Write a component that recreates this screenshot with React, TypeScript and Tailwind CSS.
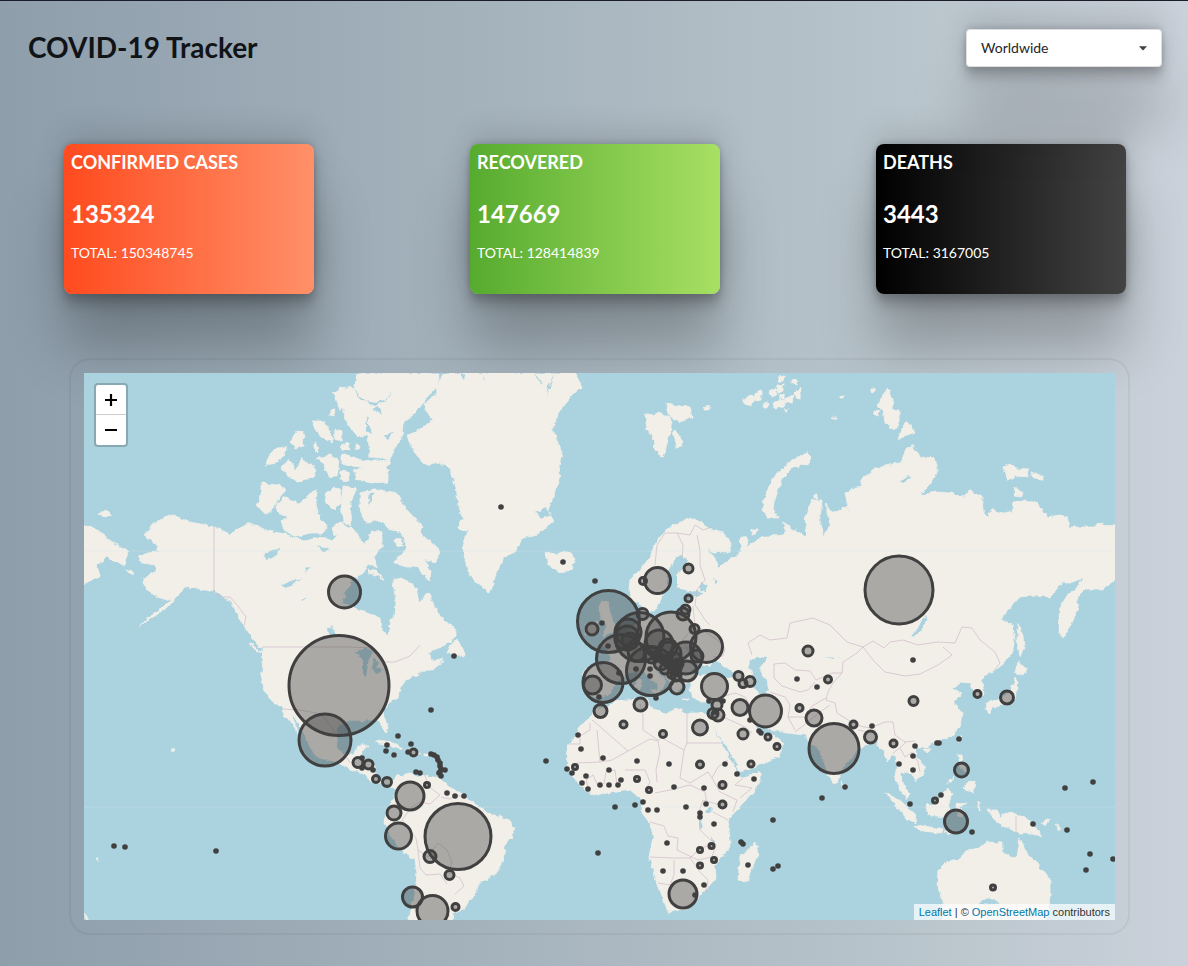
import { useState } from "react";

const LAND: string[] = [
  // North America
  "214,527 200,524 190,522 178,517 170,515 160,519 152,525 144,535 150,540 157,545 158,552 148,553 138,557 143,563 155,565 156,571 146,577 143,583 148,590 154,595 165,600 172,598 164,606 150,617 138,627 152,618 168,607 176,597 185,588 192,587 203,590 214,591 222,596 229,600 236,610 240,620 247,630 254,640 262,649 263,660 262,672 261,680 266,692 272,702 281,706 285,717 291,722 295,728 300,738 296,726 291,714 296,718 303,732 310,747 316,756 326,760 334,761 345,766 352,770 360,772 366,776 371,782 378,783 386,783 392,787 397,790 398,782 388,779 380,781 374,776 374,765 372,762 362,760 358,758 363,752 368,745 358,745 353,755 344,755 337,748 336,737 338,727 345,722 355,720 362,722 368,719 377,719 382,727 386,734 388,728 384,717 383,710 389,703 397,697 400,690 403,684 406,680 415,676 424,670 434,666 443,659 432,662 426,657 434,650 445,645 456,636 456,630 440,617 434,605 428,593 420,602 417,589 407,580 393,578 394,590 396,603 395,615 391,620 388,636 381,628 380,618 368,613 357,609 342,603 345,592 355,577 362,574 368,563 377,567 373,557 382,547 382,532 372,530 365,545 358,536 352,527 342,533 332,541 320,536 308,541 295,538 285,534 268,531 255,525 250,523 240,528 230,534",
  // Newfoundland and the Maritimes
  "447,653 452,643 456,639 462,647 465,656 458,655",
  "418,660 428,655 436,664 444,661 432,670 424,668",
  // Vancouver Island
  "249,643 255,646 262,653 256,651",
  // Victoria Island, Banks Island, Melville Island
  "277,503 284,497 297,503 304,500 307,495 317,490 316,503 317,513 327,527 324,533 311,533 297,537 284,530 281,520 289,517 277,513",
  "261,483 277,485 286,490 277,500 274,508 266,515 257,505 261,495",
  "281,466 288,460 297,470 302,457 306,464 314,466 315,476 306,480 297,482 286,475",
  "265,466 270,454 277,448 287,447 283,457 275,463",
  "290,441 299,430 304,432 303,446 295,449",
  "313,421 324,421 334,438 331,443 324,439 317,432",
  "317,458 330,455 339,460 337,476 330,477 324,466",
  "324,495 334,487 340,489 341,503 334,510 326,502",
  "333,392 345,386 347,404 340,411",
  "334,429 342,431 342,442 336,439",
  "330,409 335,409 334,416 330,415",
  "314,443 317,445 318,452 314,448",
  "340,445 349,443 350,450 342,450",
  "355,445 360,445 359,450 355,449",
  "332,528 340,522 350,528 342,536 334,535",
  "342,453 350,456 362,460 374,461 390,460 386,470 370,468 352,466 342,464",
  "340,470 348,472 349,481 341,480",
  "354,470 372,466 388,469 388,482 372,483 357,480",
  "343,487 357,488 350,503 352,526 343,522 341,502",
  "360,493 360,510 367,523 380,520 388,528 402,533 407,548 393,563 407,567 417,567 430,582 431,570 423,560 437,562 439,550 428,540 420,533 423,527 407,510 397,493 380,490 370,490",
  "395,540 401,538 403,545 397,547",
  "368,568 376,571 385,580 378,576 369,573",
  // Ellesmere and Axel Heiberg
  "357,373 355,387 347,388 343,403 345,420 352,430 357,437 368,436 370,457 380,458 390,460 392,452 402,437 403,423 412,415 420,407 428,395 437,387 440,373",
  // Greenland
  "445,373 436,387 437,393 423,405 432,420 420,430 408,435 412,448 420,460 425,465 440,462 450,470 456,487 458,503 463,520 468,530 463,547 465,560 468,572 477,583 490,593 495,577 503,558 517,550 523,538 540,533 552,522 548,510 553,497 560,480 559,465 562,453 553,430 558,413 570,397 582,387 578,378 573,373",
  "460,520 468,523 466,531 459,528",
  // Iceland
  "545,553 553,552 556,555 570,551 576,560 570,570 560,573 552,568 547,562",
  // Cuba, Hispaniola, Jamaica, Puerto Rico
  "375,742 387,740 403,748 398,749 384,744",
  "405,750 414,749 421,753 414,756 406,754",
  "391,754 396,755 392,757",
  "424,754 429,754 428,756 424,756",
  // South America
  "390,785 398,775 404,776 412,773 418,777 428,776 440,778 450,787 463,795 473,803 480,807 487,813 503,817 512,822 515,828 512,837 505,847 503,860 497,873 480,883 473,897 463,910 453,913 452,923 408,923 415,893 417,873 415,860 400,850 392,837 384,823 387,810 393,800 397,790",
  // Svalbard
  "645,413 652,415 660,412 672,420 670,433 663,458 655,450 653,437 647,430",
  "667,403 678,406 690,407 692,417 680,422 668,415",
  "673,430 678,434 683,442 678,448 675,440",
  "704,407 710,405 709,410 704,410",
  // Franz Josef Land
  "742,401 750,396 755,397 752,405 746,405",
  "755,393 761,390 761,400 756,401",
  "769,391 775,388 777,395 771,398",
  "777,386 783,384 783,391 778,393",
  "773,402 784,400 785,407 774,408",
  "778,396 784,394 784,399 779,399",
  "785,397 793,395 792,404 785,402",
  "794,393 801,388 801,399 795,398",
  "763,404 769,403 768,408 764,408",
  "779,377 785,376 784,381 779,381",
  "792,380 797,380 796,384 792,383",
  "840,395 844,395 843,398 840,398",
  "831,417 836,417 836,420",
  "785,409 788,409 787,412",
  // Novaya Zemlya
  "762,510 765,497 770,484 777,473 790,462 800,456 807,453 811,457 808,463 793,468 783,478 777,493 773,507 778,518 768,518",
  "751,530 757,530 756,535 752,535",
  "814,494 818,494 817,498 814,498",
  // Severnaya Zemlya
  "887,388 893,398 892,408 882,410 877,405",
  "883,408 899,410 899,420 895,430 885,423",
  "907,420 915,432 905,436 898,441 902,430",
  "874,410 881,411 878,416 874,414",
  "871,389 875,389 874,393 871,392",
  // New Siberian Islands
  "1004,467 1010,463 1016,468 1027,469 1028,477 1016,476 1008,481",
  "1031,472 1043,476 1043,480 1034,479",
  "1013,485 1023,493 1022,496 1015,495",
  // Wrangel and Chukotka
  "99,514 106,510 111,515 104,518",
  "80,524 90,526 97,530 105,537 117,545 130,552 126,557 124,565 114,562 107,556 103,561 97,565 100,577 92,580 80,585",
  "126,570 133,572 132,575",
  // Eurasia
  "645,610 640,604 631,599 629,590 630,580 640,570 650,557 657,540 670,527 690,518 702,523 712,530 723,533 732,543 728,553 713,552 706,548 715,558 718,567 727,563 730,558 737,557 742,547 740,537 747,538 746,548 760,537 783,535 787,531 782,522 790,527 807,537 805,517 812,500 822,500 820,520 824,537 830,525 825,503 833,513 847,507 851,520 845,493 850,490 860,487 863,477 877,468 902,462 905,450 912,445 920,457 935,458 938,470 930,485 920,495 937,492 950,493 965,497 968,490 982,497 983,510 988,518 992,508 998,513 1012,512 1013,502 1025,501 1037,503 1047,517 1060,515 1067,517 1070,527 1093,527 1097,524 1120,525 1120,576 1115,580 1100,590 1083,590 1077,600 1078,610 1070,627 1062,638 1058,627 1060,607 1068,594 1077,587 1083,578 1070,583 1062,583 1050,597 1035,595 1020,597 1010,608 1000,620 1013,625 1015,640 1012,653 997,670 987,673 982,680 984,695 975,698 970,683 960,682 956,687 950,688 962,693 953,702 962,713 960,727 950,737 933,743 927,747 915,747 917,757 925,767 923,775 915,782 912,774 905,772 900,773 902,782 910,793 907,800 900,790 895,778 897,763 893,753 887,762 883,750 878,745 875,740 867,745 858,750 847,763 840,773 837,783 832,783 825,767 819,750 815,745 808,744 805,735 787,733 777,731 768,728 760,727 754,718 747,710 749,717 756,727 760,733 768,737 774,735 784,743 778,757 760,765 740,772 736,763 727,747 713,727 709,722 712,716 712,702 700,702 693,698 690,690 690,682 683,683 678,693 672,689 668,680 661,672 655,665 652,666 660,675 666,683 663,685 660,693 657,692 659,685 648,676 643,670 636,671 627,675 617,682 610,694 600,697 586,695 583,687 584,668 603,665 610,660 608,650 600,644 610,640 622,637 630,628 638,623 640,613",
  // Great Britain and Ireland
  "602,600 608,602 610,613 615,623 618,629 602,637 607,627 602,620 598,610",
  "587,623 598,622 596,634 585,635",
  // Sicily, Sardinia, Corsica, Crete, Cyprus
  "650,690 658,690 656,695",
  "637,680 641,681 640,689 636,688",
  "638,672 641,672 640,678",
  "682,699 690,699 686,701",
  "705,701 711,699 708,703",
  // Africa
  "595,707 604,709 614,702 627,700 648,698 650,708 660,711 667,715 675,708 687,713 700,713 709,715 711,724 723,746 733,763 738,774 743,778 760,772 760,782 747,800 737,810 730,817 728,830 730,847 718,860 715,865 716,878 703,893 690,907 675,911 668,913 665,903 657,883 649,857 653,837 650,823 642,813 642,800 630,790 617,792 592,795 580,785 573,777 567,768 568,745 580,727 592,715",
  "755,843 758,853 747,882 738,880 740,857",
  // Sri Lanka, Indonesia, New Guinea
  "841,782 845,785 843,789",
  "885,792 892,795 903,803 915,815 917,823 908,820 897,807",
  "915,825 923,826 943,829 942,833 930,832 917,830",
  "925,803 935,805 941,796 948,788 953,793 948,803 950,810 945,817 928,815",
  "956,804 968,803 960,806 964,813 960,817 957,812",
  "978,802 980,802 980,810 978,809",
  "944,832 952,832 950,834",
  "987,810 997,810 1000,817 1010,812 1027,818 1037,830 1042,837 1033,833 1020,834 1013,830 1000,825 993,817",
  "1041,823 1050,819 1046,826",
  "1055,824 1062,829 1060,830",
  "957,755 962,755 963,765 970,775 960,768",
  "967,783 975,781 974,792 968,791 963,787",
  "953,777 947,785 950,779",
  // Japan, Sakhalin, Taiwan, Hainan
  "1018,662 1028,670 1020,675 1015,672",
  "1015,678 1018,683 1015,698 1007,705 992,706 990,713 986,710 987,703 1000,699 1010,692 1013,685",
  "1018,623 1023,637 1024,647 1020,657 1017,640",
  "958,737 961,737 959,744",
  "924,749 930,749 927,754",
  // Australia
  "938,870 945,863 960,858 967,850 980,848 987,842 1002,843 1002,852 1013,858 1017,857 1020,838 1027,853 1037,863 1050,880 1050,897 1045,923 943,923 943,903 937,885",
  // Pacific islands
  "171,749 174,750 172,752",
  "84,914 88,919 84,920",
  "96,858 98,859 97,861",
];

const WATER: string[] = [
  // Gulf of Bothnia, Gulf of Finland, Baltic Sea, White Sea
  "676,557 683,556 687,560 683,567 677,574 677,587 687,592 698,591 703,594 690,597 686,604 680,611 668,613 655,616 648,618 645,608 650,612 656,610 662,598 668,588 667,577 671,566",
  "701,582 708,585 706,591 700,590",
  "713,578 718,580 716,585",
  // Black Sea, Sea of Azov, Caspian Sea
  "692,672 697,663 704,665 710,667 714,660 719,662 724,667 737,676 728,678 715,673 700,675",
  "757,657 767,658 763,665 758,668 767,680 768,690 762,695 755,690 752,680 753,673 748,668 750,661",
  // Lakes
  "355,653 367,648 373,653 369,658 366,677 363,676 363,658",
  "373,658 379,663 376,668 384,670 376,674 372,668",
  "263,555 272,550 280,549 277,555 270,559 266,560",
  "281,585 290,581 303,578 292,584 286,588",
  "300,600 308,597 302,601",
  "328,628 332,626 335,636 329,634",
  "304,569 309,568 306,573",
  "911,636 917,630 923,618 927,616 924,626 918,634",
  "898,481 905,478 912,477 905,482",
  "825,657 834,658 842,658 832,659",
  "707,809 712,807 711,813 706,813",
  "700,818 702,826 700,831 699,824",
  "711,837 714,843 712,849",
  // Arctic fjords
  "366,401 376,403 384,400 392,392 384,402 374,406",
  "372,410 378,407 382,415 376,411",
  "353,388 360,396 367,403 361,400",
  "366,415 368,425 372,433 366,430",
  "384,437 394,432 388,440",
  "370,493 368,505 372,501 374,492",
  "462,373 466,375 462,380",
  "480,373 486,382 484,378",
  "534,373 543,384 538,381",
  "553,373 550,388 547,395 550,382",
  "535,513 546,508 550,516 542,518",
  "317,545 330,549 322,552",
  "983,900 990,897 1000,903 990,905 980,904",
];

const BORDERS: string[] = [
  "214,527 214,591 222,597 230,597 238,606 246,617 244,626",
  "262,647 350,647 370,648 382,662 395,662 410,656 420,645",
  "281,709 300,710 322,714 336,734",
  "345,755 350,763",
  "425,775 428,786 440,795 430,804 420,802 412,807 402,820 416,838 418,850 428,857 438,843 447,850 452,862 449,873 460,878 464,886 455,894",
  "441,797 450,799 457,795 466,799",
  "418,850 420,868 426,875 440,874 447,884",
  "655,565 657,545 665,533 677,533 690,535 695,525 703,530 712,527",
  "677,533 683,545 682,560",
  "697,535 700,550 700,565 705,580 697,590 695,605 700,612 705,620 710,625",
  "693,606 695,625 683,640 690,655",
  "700,628 717,640 725,648 723,656 713,657",
  "752,655 748,643 760,635 770,640 787,638 790,623 813,618 830,625 847,642 863,647 857,653 843,662 842,673 833,683",
  "774,678 774,664 785,663 795,670 810,671 816,680 832,673 842,673",
  "774,678 782,686 800,692 808,690 815,682",
  "863,647 873,641 884,648 890,642 903,640 918,645 937,642 955,643 962,627 972,628 980,640 995,652 1000,663 993,672",
  "863,647 873,660 885,672 905,676 920,674 938,665 952,655 943,647",
  "833,683 828,692 826,700 835,703 837,713 848,720 860,726 870,728 885,722 893,722 895,735 905,742 915,741",
  "770,692 785,697 790,705 788,717 795,730",
  "788,717 805,717 812,706 826,698",
  "795,732 808,722 820,712 830,705",
  "725,696 735,693 745,697 752,708",
  "715,714 730,720 745,727 752,733",
  "687,713 687,743 722,743",
  "687,743 684,750 662,738 658,740 643,730 643,715 640,704",
  "592,720 598,725 628,751 650,739 658,741 660,752 656,770 657,782",
  "568,744 580,744 580,736 590,730 590,723",
  "597,730 600,762 577,763",
  "600,762 612,760 628,751",
  "684,750 680,778 690,783 708,772 712,778 718,767 728,760",
  "625,770 645,770 650,782 645,792",
  "604,784 606,772 615,770 617,785",
  "590,793 586,780 593,775 598,786",
  "650,822 664,826 668,836 678,838 677,850 698,860 712,857 716,845 700,830 699,812 703,800 720,805",
  "650,857 673,858 690,858 700,872 708,880 706,893",
  "674,860 674,875 670,885 658,883",
  "690,858 700,848 712,845",
  "655,793 670,790 690,785 705,792 707,805",
  "712,778 720,792 737,800 733,812",
  "743,778 735,785 752,788 740,798",
  "713,812 728,820",
  "668,648 690,648",
  "893,753 900,748 906,742",
  "900,748 905,757 912,752 918,762 920,772",
  "1016,816 1016,834",
  "858,730 868,732 876,730",
];

const GRID: string[] = ["84,551 1115,551", "84,807 1115,807"];

type Mark = [x: number, y: number, radius: number];

const OUTBREAKS: Mark[] = [
  [339, 685.5, 50], [325, 740, 26], [344.5, 592, 16], [458, 836.5, 33], [410, 796, 14], [394, 813, 7],
  [398.5, 836, 13], [430, 856.5, 6], [449.5, 875, 4.5], [412.5, 897, 10], [432.5, 911, 15.5], [455.5, 907, 3.5],
  [358, 762.5, 5], [368.5, 764.5, 4.5], [376, 779, 3.5], [387, 782, 4.5], [413.5, 752.5, 3.5], [427, 785, 2.5],
  [608.5, 621.5, 31], [592, 629, 6], [643, 581, 3.5], [657.5, 580.5, 13], [688.5, 568.5, 4.5], [688.5, 598.5, 3.5],
  [685.5, 609.5, 4.5], [683, 614, 6], [642.5, 614, 5.5], [694.5, 629, 4.5], [621, 659, 24.5], [603, 682.5, 20],
  [592.5, 685, 9], [639.5, 637, 24.5], [671, 637, 25], [706.5, 646.5, 16], [628, 632, 13], [627, 638, 12],
  [630, 641, 8], [637, 652, 9], [659, 644, 14], [652, 655, 8], [651, 671, 24.5], [669, 654, 12],
  [686, 658, 16], [687, 671, 10], [677, 687, 7], [673, 661, 9], [668, 648, 9], [661, 663, 7],
  [657, 656, 5], [665, 669, 5], [675, 669, 6], [676, 676, 5], [672, 674, 4.5], [678, 664, 5],
  [697, 656, 6], [714.5, 686.5, 13], [738.5, 676, 4.5], [743, 683.5, 4], [750, 681.5, 5], [600.5, 711, 6.5],
  [623.5, 724.5, 3.5], [640.5, 704.5, 6.5], [663, 734, 3.5], [700, 727.5, 7.5], [740, 707.5, 8], [765.5, 711, 16],
  [717, 705, 5], [713, 713.5, 5], [718, 715, 6], [743, 734, 5], [768, 737, 3], [777, 746.5, 3],
  [751, 764, 3], [799.5, 708, 3.5], [814, 718, 8], [700, 764.5, 3.5], [722.5, 785, 3.5], [722.5, 804.5, 3.5],
  [637, 779, 2.5], [649, 790, 2.5], [575, 767, 2.5], [700, 850, 2.5], [711.5, 846, 2.5], [714, 860, 2.5],
  [700, 865.5, 2.5], [683, 894, 14], [834, 748.5, 25], [899, 590, 34], [808, 651, 5], [828, 679.5, 3.5],
  [913.5, 701, 4.5], [977.5, 694, 3.5], [1007, 697.5, 6.5], [853.5, 724.5, 3.5], [870.5, 737, 6], [893.5, 743.5, 3.5],
  [961.5, 770, 7], [935, 800.5, 2.5], [956, 821.5, 11.5], [993, 887.5, 2.5],
];

const SMALL_OUTBREAKS: [x: number, y: number][] = [
  [447, 793], [455, 796], [464, 796], [362, 768], [362, 758], [373, 770], [398, 736], [387, 745],
  [386, 751], [394, 755], [411, 744], [408, 752], [416, 772], [420, 773], [431, 710], [454, 656],
  [431, 754], [434, 755], [437, 757], [438, 760], [440, 763], [440, 766], [441, 769], [440, 772],
  [445, 770], [439, 773], [441, 776], [114, 846], [125, 847], [216, 851], [501, 507], [563, 562],
  [595, 581], [602, 623], [608, 646], [650, 669], [650, 676], [636, 669], [619, 673], [656, 698],
  [599, 697], [709, 701], [723, 701], [715, 712], [750, 720], [759, 731], [761, 733], [578, 735],
  [581, 749], [603, 758], [637, 761], [669, 764], [725, 764], [737, 774], [754, 779], [567, 769],
  [572, 773], [586, 776], [582, 783], [588, 789], [600, 785], [609, 785], [609, 770], [618, 785],
  [621, 780], [674, 787], [704, 788], [706, 804], [643, 802], [635, 805], [615, 807], [648, 810],
  [657, 810], [686, 807], [700, 813], [700, 817], [714, 824], [667, 843], [663, 871], [683, 871],
  [704, 885], [748, 865], [741, 842], [743, 844], [773, 869], [778, 866], [773, 820], [822, 798],
  [598, 853], [546, 761], [695, 895], [913, 660], [872, 726], [915, 746], [913, 756], [899, 764],
  [913, 770], [937, 743], [939, 743], [959, 739], [845, 787], [910, 804], [941, 795], [972, 832],
  [1065, 788], [1093, 782], [1033, 824], [1067, 830], [1090, 854], [1113, 859], [1086, 870],
  [797, 679], [817, 687],
];

function WorldMap() {
  return (
    <svg
      viewBox="84 373 1031 547"
      preserveAspectRatio="xMidYMid slice"
      className="block h-auto w-full bg-[#aad3df]"
      role="img"
      aria-label="World map of cases"
    >
      <defs>
        <filter id="coast" filterUnits="userSpaceOnUse" x="74" y="363" width="1051" height="567" colorInterpolationFilters="sRGB">
          <feTurbulence type="fractalNoise" baseFrequency="0.18" numOctaves="2" seed="4" />
          <feDisplacementMap in="SourceGraphic" scale="5" xChannelSelector="R" yChannelSelector="G" />
        </filter>
      </defs>
      <g filter="url(#coast)">
        <g fill="#f2efe9" stroke="#f2efe9" strokeWidth="0.8">
          {LAND.map((points) => (
            <polygon key={points} points={points} />
          ))}
        </g>
        <g fill="#aad3df">
          {WATER.map((points) => (
            <polygon key={points} points={points} />
          ))}
        </g>
      </g>
      <g fill="none" stroke="#cbb5c4" strokeWidth="0.8" strokeOpacity="0.8">
        {BORDERS.map((points) => (
          <polyline key={points} points={points} />
        ))}
      </g>
      <g fill="none" stroke="#d8e6ea" strokeOpacity="0.35">
        {GRID.map((points) => (
          <polyline key={points} points={points} />
        ))}
      </g>
      <g fill="#404040" fillOpacity="0.4" stroke="#404040" strokeWidth="3">
        {OUTBREAKS.map(([x, y, r]) => (
          <circle key={`${x}-${y}`} cx={x} cy={y} r={r} />
        ))}
      </g>
      <g fill="#404040">
        {SMALL_OUTBREAKS.map(([x, y]) => (
          <circle key={`${x}-${y}`} cx={x} cy={y} r="2.8" />
        ))}
      </g>
    </svg>
  );
}

const CARDS = [
  { title: "CONFIRMED CASES", today: "135324", total: "150348745", tone: "from-[#ff4b1f] to-[#ff9068]" },
  { title: "RECOVERED", today: "147669", total: "128414839", tone: "from-[#56ab2f] to-[#a8e063]" },
  { title: "DEATHS", today: "3443", total: "3167005", tone: "from-[#000000] to-[#434343]" },
];

const SHADOW =
  "shadow-[0_54px_55px_rgba(0,0,0,0.25),0_-12px_30px_rgba(0,0,0,0.12),0_4px_6px_rgba(0,0,0,0.12),0_12px_13px_rgba(0,0,0,0.17),0_-3px_5px_rgba(0,0,0,0.09)]";

export default function App() {
  const [region, setRegion] = useState("Worldwide");

  return (
    <div className="min-h-screen border-t border-[#1c1d2b] bg-linear-to-r/srgb from-[#8e9eab] via-[#b8c4cb] via-75% to-[#cad1da] font-['Lato',sans-serif] text-[#111417]">
      <header className="flex items-start justify-between pt-7 pr-[26px] pl-7">
        <h1 className="text-[28px] leading-9 font-bold">COVID-19 Tracker</h1>
        <div className={`relative w-[196px] rounded ${SHADOW}`}>
          <select
            aria-label="Region"
            value={region}
            onChange={(event) => setRegion(event.target.value)}
            className="h-[38px] w-full appearance-none rounded border border-[#dededf] bg-white pl-[14px] text-sm text-[#262626]"
          >
            <option>Worldwide</option>
          </select>
          <svg viewBox="0 0 8 5" className="pointer-events-none absolute top-[17px] right-[15px] h-[5px] w-2" aria-hidden="true">
            <path d="M0 .3h8L4 4.6z" fill="#404040" />
          </svg>
        </div>
      </header>

      <main>
        <section className="flex flex-wrap justify-between gap-6 pt-[77px] pr-[62px] pl-16" aria-label="Totals">
          {CARDS.map((card) => (
            <article
              key={card.title}
              className={`h-[150px] w-[250px] rounded-lg bg-linear-to-r/srgb px-[7px] pt-2 text-white ${card.tone} ${SHADOW}`}
            >
              <h2 className="text-lg leading-5 font-bold">{card.title}</h2>
              <p className="mt-7 text-2xl leading-7 font-bold">{card.today}</p>
              <p className="mt-[15px] text-sm leading-5">TOTAL: {card.total}</p>
            </article>
          ))}
        </section>

        <section
          className="relative mt-[65px] mr-[59px] ml-[70px] rounded-[20px] border border-black/5 p-[13px] shadow-[0_0_2px_rgba(0,0,0,0.14)]"
          aria-label="Map"
        >
          <div className="relative overflow-hidden">
            <WorldMap />
            <div className="absolute top-[10px] left-[10px] flex flex-col overflow-hidden rounded border-2 border-black/20 bg-white bg-clip-padding">
              <button type="button" aria-label="Zoom in" className="flex size-[30px] items-center justify-center border-b border-[#cccccc]">
                <svg viewBox="0 0 12 12" className="size-3" aria-hidden="true">
                  <path d="M0 6h12M6 0v12" stroke="#000" strokeWidth="2.2" />
                </svg>
              </button>
              <button type="button" aria-label="Zoom out" className="flex size-[30px] items-center justify-center">
                <svg viewBox="0 0 12 12" className="size-3" aria-hidden="true">
                  <path d="M0 6h12" stroke="#000" strokeWidth="2" />
                </svg>
              </button>
            </div>
            <p className="absolute right-0 bottom-0 bg-white/70 px-[5px] font-['Liberation_Sans',sans-serif] text-[11px] leading-4 text-[#333333]">
              <a href="https://leafletjs.com" className="text-[#0078a8]">Leaflet</a> | ©{" "}
              <a href="https://www.openstreetmap.org/copyright" className="text-[#0078a8]">OpenStreetMap</a> contributors
            </p>
          </div>
        </section>
      </main>
    </div>
  );
}
